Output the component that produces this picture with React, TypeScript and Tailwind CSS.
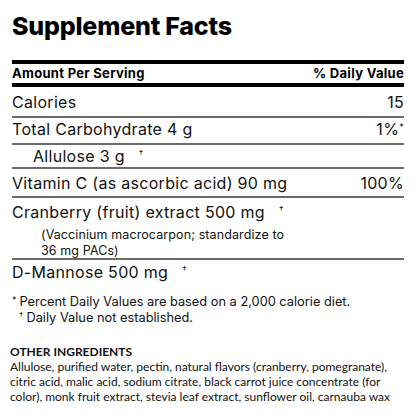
import React from "react";

const dagger = <span className="relative -top-[5px] ml-[14px] text-[9px]">†</span>;

function Row({
  label,
  value,
  height,
  indent,
}: {
  label: React.ReactNode;
  value?: React.ReactNode;
  height: string;
  indent?: boolean;
}) {
  return (
    <div className={`flex justify-between items-center ${height}`}>
      <span className={indent ? "pl-[21px]" : ""}>{label}</span>
      {value !== undefined && <span>{value}</span>}
    </div>
  );
}

export default function App() {
  return (
    <div className="w-[416px] h-[416px] bg-white text-black overflow-hidden px-3 font-['Inter',sans-serif]">
      <h1 className="pt-[9px] text-[25px] leading-[34px] font-extrabold tracking-[-0.2px]">
        Supplement Facts
      </h1>
      <div className="mt-[17px] w-[392px]">
        <div className="h-[4px] bg-black" />
        <div className="flex justify-between items-center h-[19px] text-[13px] font-bold tracking-[0.3px]">
          <span>Amount Per Serving</span>
          <span>% Daily Value</span>
        </div>
        <div className="h-[4px] bg-black" />
        <div className="text-[16px] tracking-[0.3px] text-[#111]">
          <Row label="Calories" value="15" height="h-[29px]" />
          <div className="h-[2px] bg-[#6b6b6b]" />
          <Row
            label="Total Carbohydrate 4 g"
            value={
              <>
                1%<span className="relative -top-[5px] text-[9px]">*</span>
              </>
            }
            height="h-[25px] pb-[3px]"
          />
          <div className="h-[2px] bg-[#6b6b6b]" />
          <Row label={<>Allulose 3 g{dagger}</>} height="h-[22px]" indent />
          <div className="h-[2px] bg-[#6b6b6b]" />
          <Row label="Vitamin C (as ascorbic acid) 90 mg" value="100%" height="h-[27px]" />
          <div className="h-[2px] bg-[#6b6b6b]" />
          <div className="h-[60px] pt-[5px]">
            <div className="leading-[18px]">Cranberry (fruit) extract 500 mg{dagger}</div>
            <div className="pl-[29px] pt-[3px] text-[12.5px] leading-[16px] tracking-[0.1px]">
              (Vaccinium macrocarpon; standardize to
              <br />
              36 mg PACs)
            </div>
          </div>
          <div className="h-[2px] bg-[#6b6b6b]" />
          <div className="h-[24px] flex items-center">
            <span>D-Mannose 500 mg{dagger}</span>
          </div>
        </div>
      </div>
      <div className="mt-[10px] text-[12.8px] leading-[15px] text-[#111]">
        <div>
          <span className="relative -top-[3px] text-[9px] mr-[3px]">*</span>Percent Daily
          Values are based on a 2,000 calorie diet.
        </div>
        <div className="pl-[7px]">
          <span className="relative -top-[3px] text-[9px] mr-[3px]">†</span>Daily Value not
          established.
        </div>
      </div>
      <div className="mt-[18px] -ml-[2px] text-[12px] leading-[15px] text-[#111] font-['Lato',sans-serif]">
        <div className="font-bold">OTHER INGREDIENTS</div>
        <p>
          Allulose, purified water, pectin, natural flavors (cranberry, pomegranate),
          citric acid, malic acid, sodium citrate, black carrot juice concentrate (for
          color), monk fruit extract, stevia leaf extract, sunflower oil, carnauba wax
        </p>
      </div>
    </div>
  );
}
